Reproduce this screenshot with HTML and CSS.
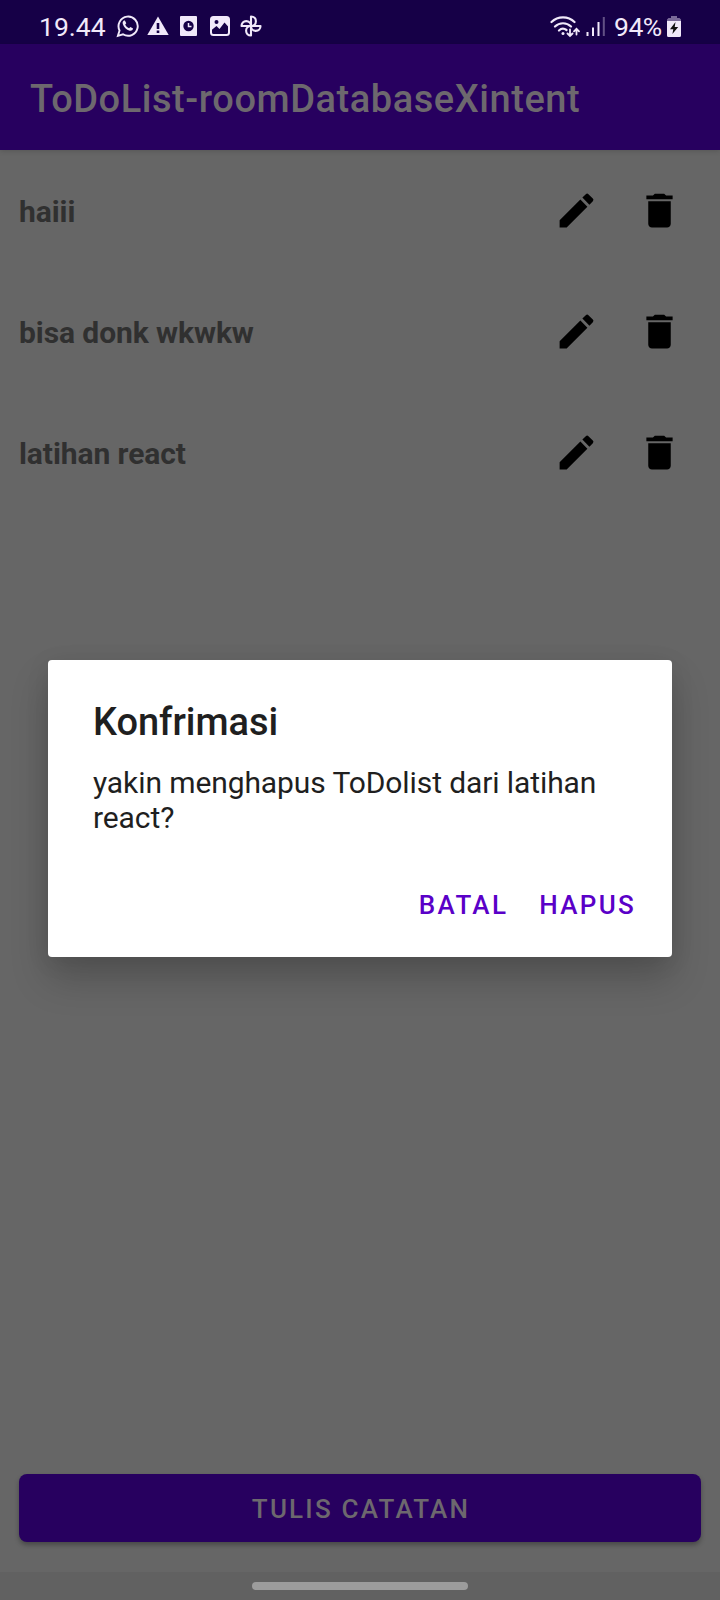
FILE: index.html
```
<!DOCTYPE html>
<html lang="id">
<head>
<meta charset="utf-8">
<title>ToDoList</title>
<link rel="stylesheet" href="styles.css">
</head>
<body>
<svg class="defs" aria-hidden="true">
  <symbol id="edit" viewBox="0 0 24 24"><path d="M3 17.25V21h3.75L17.81 9.94l-3.75-3.75L3 17.25zM20.71 7.04a1 1 0 0 0 0-1.41l-2.34-2.34a1 1 0 0 0-1.41 0l-1.83 1.83 3.75 3.75 1.83-1.83z"/></symbol>
  <symbol id="trash" viewBox="0 0 24 24"><path d="M6 19c0 1.100.9 2 2 2h8c1.100 0 2-.9 2-2V7H6v12zM19 4h-3.500l-1-1h-5l-1 1H5v2h14V4z"/></symbol>
</svg>
<div class="screen">
  <header class="status">
    <div class="status-left">
      <span class="clock">19.44</span>
      <svg class="ic-wa" viewBox="0 0 24 24" fill="none" stroke="currentColor" stroke-width="2"><path d="M2 22.300l1.700-5.700A10 10 0 1 1 7.300 20.600L2 22.300z"/><path fill="currentColor" stroke="none" d="M8.300 6.300c-1.300.8-1.600 2.100-1.200 3.500 1 3.200 3.800 6 7.100 7.100 1.600.5 3.300-.3 3.600-2.200l-2.700-1.700-1.500 1.400c-1.900-.8-3.200-2-4-3.900l1.100-1.400-1.400-2.800z"/></svg>
      <svg class="ic-warn" viewBox="0 0 22 20"><path fill="currentColor" d="M11 .5 21.700 19H.3z"/><path fill="#160047" d="M9.700 7h2.600v6H9.700zM9.700 14.500h2.600V17H9.700z"/></svg>
      <svg class="ic-clock" viewBox="0 0 17 20"><rect width="17" height="20" rx="1" fill="currentColor"/><circle cx="8.500" cy="10" r="5.200" fill="#160047"/><path d="M8.500 7v3.400h3" fill="none" stroke="currentColor" stroke-width="1.500"/></svg>
      <svg class="ic-img" viewBox="0 0 20 20"><rect x="1" y="1" width="18" height="18" rx="2.500" fill="none" stroke="currentColor" stroke-width="2"/><path fill="currentColor" fill-rule="evenodd" d="M1 1h18v10.500l-4.500-5-5 6.500-3-3L1 14.500zM6.500 4a2 2 0 1 0 0 4 2 2 0 0 0 0-4z"/></svg>
      <svg class="ic-fan" viewBox="0 0 22 22" fill="none" stroke="currentColor" stroke-width="2.100" stroke-linejoin="round"><path d="M11 11V1.500c3 0 4.900 2 4.900 4.700S14 11 11 11z"/><path d="M11 11h9.500c0 3-2 4.900-4.700 4.900S11 14 11 11z"/><path d="M11 11v9.500c-3 0-4.900-2-4.900-4.700S8 11 11 11z"/><path d="M11 11H1.500c0-3 2-4.900 4.700-4.900S11 8 11 11z"/></svg>
    </div>
    <div class="status-right">
      <svg class="ic-wifi" viewBox="0 0 30 23" fill="none" stroke="currentColor" stroke-width="2.200" stroke-linecap="round"><path d="M1.500 7a16.500 16.500 0 0 1 23 0M5 11.500a11.500 11.500 0 0 1 16 0M9 15.500a6 6 0 0 1 7.500-.5"/><circle cx="13" cy="18.500" r="1.500" fill="currentColor" stroke="none"/><path stroke-width="1.800" d="M20 14.500v6.500m-2.500-2.500L20 21l2.500-2.500M26.500 19.500v-5.500M24 16.300l2.500-2.500L29 16.300"/></svg>
      <svg class="ic-signal" viewBox="0 0 19 20" stroke="currentColor" stroke-width="2"><path d="M1.500 20v-4M7 20V11.500M12.500 20V6"/><path opacity=".35" d="M17.800 20V1"/></svg>
      <span class="percent">94%</span>
      <svg class="ic-bat" viewBox="0 0 14 21"><path fill="currentColor" opacity=".45" d="M4 0h6v2h2.500L14 3.500V6H0V3.500L1.500 2H4z"/><path fill="currentColor" d="M0 5h14v14.500a1.500 1.500 0 0 1-1.500 1.500h-11A1.500 1.500 0 0 1 0 19.500z"/><path fill="#111" d="M8.500 6 3 13.200h3.300L5.400 18l5.800-7H7.700z"/></svg>
    </div>
  </header>
  <div class="appbar"><h1>ToDoList-roomDatabaseXintent</h1></div>
  <main class="list">
    <div class="row"><span class="note">haiii</span><svg class="icon"><use href="#edit"/></svg><svg class="icon"><use href="#trash"/></svg></div>
    <div class="row"><span class="note">bisa donk wkwkw</span><svg class="icon"><use href="#edit"/></svg><svg class="icon"><use href="#trash"/></svg></div>
    <div class="row"><span class="note">latihan react</span><svg class="icon"><use href="#edit"/></svg><svg class="icon"><use href="#trash"/></svg></div>
  </main>
  <button class="write">TULIS CATATAN</button>
  <footer class="navbar"><span class="pill"></span></footer>
  <section class="dialog" role="dialog">
    <h2>Konfrimasi</h2>
    <p>yakin menghapus ToDolist dari latihan react?</p>
    <div class="actions"><button>BATAL</button><button>HAPUS</button></div>
  </section>
</div>
</body>
</html>
```
FILE: styles.css
```
* { box-sizing: border-box; margin: 0; padding: 0; }
body { font-family: Roboto, "Noto Sans", sans-serif; background: #666; }
button { font: inherit; border: 0; background: none; }
.defs { position: absolute; width: 0; height: 0; }
.screen { position: relative; width: 720px; height: 1600px; display: flex; flex-direction: column; background: #666; overflow: hidden; }

.status { height: 44px; flex: none; display: flex; justify-content: space-between; padding: 8px 39px 0 39px; background: #160047; color: #f1e9fa; }
.status-left, .status-right { display: flex; align-items: center; height: 36px; }
.clock, .percent { font-size: 26.500px; line-height: 36px; padding-top: 1px; }
.clock { width: 67px; }
.ic-wa { width: 23px; height: 24px; margin-left: 10px; }
.ic-warn { width: 22px; height: 20px; margin-left: 8px; }
.ic-clock { width: 17px; height: 20px; margin-left: 11px; }
.ic-img { width: 20px; height: 20px; margin-left: 13px; }
.ic-fan { width: 22px; height: 22px; margin-left: 10px; }
.ic-wifi { width: 30px; height: 23px; margin-right: 6px; }
.ic-signal { width: 19px; height: 20px; margin-right: 9px; }
.percent { width: 49px; letter-spacing: -0.5px; }
.ic-bat { width: 14px; height: 21px; margin-left: 4px; }

.appbar { height: 106px; flex: none; display: flex; align-items: center; padding: 4px 0 0 30px; background: #27005f; box-shadow: 0 1px 5px rgba(0, 0, 0, .16); z-index: 1; }
h1 { font-size: 38px; font-weight: 500; line-height: 46px; letter-spacing: .55px; color: #6d686e; }

.list { flex: 1; }
.row { height: 121px; display: flex; align-items: center; padding: 0 38px 0 19px; }
.note { flex: 1; padding-top: 2px; font-size: 30px; font-weight: 700; letter-spacing: -.08px; color: #303030; }
.icon { width: 45px; height: 45px; }
.icon + .icon { margin-left: 38px; }

.write { height: 68px; flex: none; margin: 0 19px 30px; padding: 2px 0 0 2px; border-radius: 8px; background: #27005f; color: #6d686e; font-size: 26px; font-weight: 500; letter-spacing: 2.200px; box-shadow: 0 3px 5px rgba(0, 0, 0, .3); }
.navbar { height: 28px; flex: none; display: flex; justify-content: center; padding-top: 10px; background: #616161; }
.pill { width: 216px; height: 8px; border-radius: 4px; background: #9c9c9c; }

.dialog { position: absolute; left: 48px; top: 660px; width: 624px; height: 297px; padding: 38px 28px 20px 45px; display: flex; flex-direction: column; border-radius: 4px; background: #fff; color: #1f1f1f; box-shadow: 0 22px 38px rgba(0, 0, 0, .2), 0 4px 24px rgba(0, 0, 0, .08); z-index: 2; }
h2 { font-size: 38px; font-weight: 500; line-height: 48px; letter-spacing: -.05px; }
p { font-size: 30px; line-height: 35px; letter-spacing: -.1px; margin-top: 19px; }
.actions { margin-top: auto; display: flex; justify-content: flex-end; }
.actions button { height: 64px; padding: 0 8px; margin-left: 15px; font-size: 26px; font-weight: 500; letter-spacing: 2.300px; color: #5a00c8; }
```
